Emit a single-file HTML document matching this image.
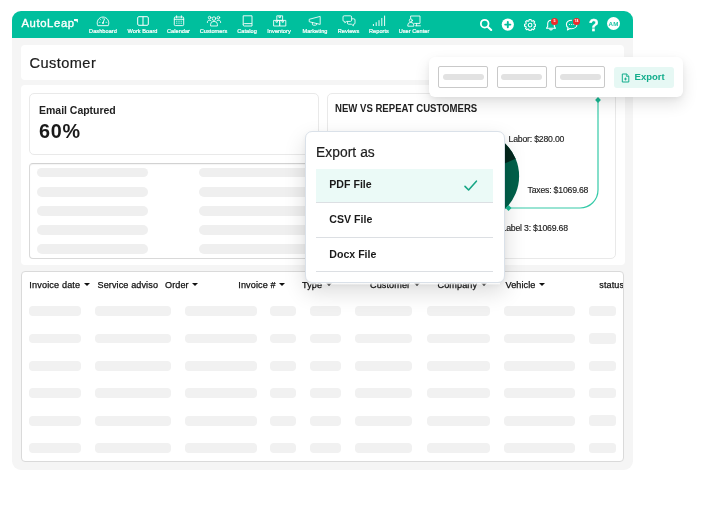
<!DOCTYPE html>
<html lang="en">
<head>
<meta charset="utf-8">
<title>AutoLeap - Customer</title>
<style>
*{box-sizing:border-box;margin:0;padding:0}
html,body{width:720px;height:516px;background:#fff;overflow:hidden}
body{position:relative;will-change:transform;font-family:"Liberation Sans","DejaVu Sans",sans-serif;color:#1b1b1b}
.abs{position:absolute}
#win{left:12px;top:11px;width:621px;height:459px;background:#f5f5f5;border-radius:9px;overflow:hidden}
#nav{left:0;top:0;width:621px;height:26.5px;background:#00bf9d}
#logo{font-size:11.3px;line-height:14px;color:#fff;font-weight:400;letter-spacing:.62px;white-space:nowrap;-webkit-text-stroke:.35px #fff}
.ni{position:absolute;top:0;height:26px;width:50px;margin-left:-25px;text-align:center;color:#fff}
.ni svg{position:absolute;left:50%;top:5.2px;width:14px;height:10px;margin-left:-7px;overflow:visible}
.ni span{position:absolute;left:-10px;right:-10px;top:17.3px;font-size:5.6px;line-height:6px;white-space:nowrap;font-weight:400;letter-spacing:.05px;-webkit-text-stroke:.22px #fff}
.card{position:absolute;background:#fff;border-radius:4px}
.sk{position:absolute;height:9.8px;border-radius:5px;background:#efefef;margin-top:-.2px}
.th{position:absolute;top:278.6px;letter-spacing:.1px;font-size:9.1px;line-height:12px;white-space:nowrap;color:#111;font-weight:400;-webkit-text-stroke:.25px #111}
.th i{display:inline-block;width:0;height:0;border-left:3px solid transparent;border-right:3px solid transparent;border-top:3.4px solid #111;margin-left:3.4px;vertical-align:1.2px}
.tb{position:absolute;height:9.7px;border-radius:4px;background:#f1f1f1}
</style>
</head>
<body>
<div id="win" class="abs">
  <div id="nav" class="abs"></div>
</div>

<!-- NAV CONTENT (page coords) -->
<div id="logo" class="abs" style="left:21.4px;top:16.25px">AutoLeap</div>
<svg class="abs" style="left:74.3px;top:18.6px" width="3.9" height="4.1" viewBox="0 0 5 5"><path d="M0 0L5 0L5 5Q4.4 3.6 3.2 2.9Q1.8 2.2 0 2.3Z" fill="#fff"/></svg>

<div class="ni" style="left:103px;top:11px"><svg viewBox="0 0 14 10" fill="none" stroke="#fff" stroke-width="0.9" stroke-linecap="round" stroke-linejoin="round"><path d="M1.6 9.3A5.9 5.9 0 1 1 12.4 9.3Z"/><path d="M7 6.8L8.6 2.8"/><circle cx="7" cy="7" r="0.9" fill="#fff" stroke="none"/><path d="M3.2 6.3h.8M10 6.3h.8M4.3 3.4l.5.5M7 2.1v.7" stroke-width=".7"/></svg><span>Dashboard</span></div>
<div class="ni" style="left:142.5px;top:11px"><svg viewBox="0 0 14 10" fill="none" stroke="#fff" stroke-width="1"><rect x="1.7" y="0.7" width="10.6" height="8.6" rx="1.2"/><path d="M7 0.7V9.3"/></svg><span>Work Board</span></div>
<div class="ni" style="left:178.5px;top:11px"><svg viewBox="0 0 14 10" fill="none" stroke="#fff" stroke-width="0.9"><rect x="2.3" y="1" width="9.4" height="8.6" rx="1"/><path d="M2.3 3.3H11.7M4.6 -0.2V1.8M9.4 -0.2V1.8" stroke-linecap="round"/><path d="M4.3 5.2h1M6.5 5.2h1M8.7 5.2h1M4.3 7.2h1M6.5 7.2h1M8.7 7.2h1" stroke-width="1"/></svg><span>Calendar</span></div>
<div class="ni" style="left:213.5px;top:11px"><svg viewBox="0 0 14 10" fill="none" stroke="#fff" stroke-width="0.85" stroke-linecap="round"><circle cx="7" cy="2.6" r="1.8"/><path d="M3.6 9.6V8.2A3.4 2.8 0 0 1 10.4 8.2V9.6Z" stroke-linejoin="round"/><circle cx="2.6" cy="1.6" r="1.3"/><circle cx="11.4" cy="1.6" r="1.3"/><path d="M0.4 6.6V5.8A2.2 2 0 0 1 4 4.6M13.6 6.6V5.8A2.2 2 0 0 0 10 4.6"/></svg><span>Customers</span></div>
<div class="ni" style="left:247px;top:11px"><svg viewBox="0 0 14 10" fill="none" stroke="#fff" stroke-width="0.9" stroke-linejoin="round"><path d="M3.2 -0.2H12V10H4.4A1.2 1.2 0 0 1 3.2 8.8Z"/><path d="M3.2 8.6A1.2 1.2 0 0 1 4.4 7.6H12"/></svg><span>Catalog</span></div>
<div class="ni" style="left:279px;top:11px"><svg viewBox="0 0 14 10" fill="none" stroke="#fff" stroke-width="0.85" stroke-linejoin="round"><rect x="4.8" y="-0.2" width="5.8" height="4.6"/><path d="M7 -0.2V1.6H8.4V-0.2"/><rect x="1.6" y="4.4" width="6.1" height="5.6"/><rect x="7.7" y="4.4" width="6.1" height="5.6"/><path d="M4 4.4V6.2H5.4V4.4M10 4.4V6.2H11.4V4.4"/></svg><span>Inventory</span></div>
<div class="ni" style="left:315px;top:11px"><svg viewBox="0 0 14 10" fill="none" stroke="#fff" stroke-width="0.85" stroke-linejoin="round" stroke-linecap="round"><path d="M1.6 3.2L12.2 0.4V8.4L1.6 5.8Z"/><path d="M4.4 6.5V8.2A1 1 0 0 0 5.4 9.2H7.6A1 1 0 0 0 8.6 8.2V7.6"/></svg><span>Marketing</span></div>
<div class="ni" style="left:348.5px;top:11px"><svg viewBox="0 0 14 10" fill="none" stroke="#fff" stroke-width="0.85" stroke-linejoin="round"><path d="M2.2 -0.2H8.4A1.2 1.2 0 0 1 9.6 1V4.2A1.2 1.2 0 0 1 8.4 5.4H4.6L2.8 6.8V5.4H2.2A1.2 1.2 0 0 1 1 4.2V1A1.2 1.2 0 0 1 2.2 -0.2Z"/><path d="M9.6 2.8H11.8A1.2 1.2 0 0 1 13 4V7A1.2 1.2 0 0 1 11.8 8.2H11.4V9.8L9.4 8.2H6.6A1.2 1.2 0 0 1 5.4 7V5.4"/></svg><span>Reviews</span></div>
<div class="ni" style="left:379px;top:11px"><svg viewBox="0 0 14 10" fill="none" stroke="#fff" stroke-width="0.95" stroke-linecap="round"><path d="M1.4 9.6V8.4M4.2 9.6V6.6M7 9.6V4.6M9.8 9.6V2.4M12.6 9.6V0"/></svg><span>Reports</span></div>
<div class="ni" style="left:414px;top:11px"><svg viewBox="0 0 14 10" fill="none" stroke="#fff" stroke-width="0.85" stroke-linejoin="round" stroke-linecap="round"><path d="M3.6 2.4V0H13V7.4H7.6"/><circle cx="3.8" cy="4.4" r="1.5"/><path d="M0.8 9.8V9A3 2.6 0 0 1 6.8 9V9.8Z"/><path d="M8.6 9.8H13.4M9.6 7.4V9.8"/></svg><span>User Center</span></div>

<!-- right nav icons -->
<svg class="abs" style="left:479px;top:17.6px" width="15" height="14" viewBox="0 0 15 14" fill="none" stroke="#fff"><circle cx="5.7" cy="5.7" r="3.85" stroke-width="1.8"/><path d="M8.7 8.7L12.2 12" stroke-width="2.1" stroke-linecap="round"/></svg>
<svg class="abs" style="left:501px;top:18px" width="14" height="14" viewBox="0 0 14 14"><circle cx="6.8" cy="6.6" r="6.1" fill="#fff"/><path d="M6.8 4V9.2M4.2 6.6H9.4" stroke="#00bf9d" stroke-width="1.9" stroke-linecap="round"/></svg>
<svg class="abs" style="left:523.9px;top:18.6px" width="12.2" height="12.2" viewBox="0 0 14 14" fill="none" stroke="#fff" stroke-width="1.25" stroke-linejoin="round"><path d="M5.9 0.9h2.2l.3 1.6 1 .45 1.4-.9 1.5 1.5-.9 1.4.45 1 1.6.3v2.2l-1.6.3-.45 1 .9 1.4-1.5 1.5-1.4-.9-1 .45-.3 1.6H5.9l-.3-1.6-1-.45-1.4.9-1.5-1.5.9-1.4-.45-1-1.6-.3V6.25l1.6-.3.45-1-.9-1.4 1.5-1.5 1.4.9 1-.45z" transform="translate(0 -.3)"/><circle cx="7" cy="7" r="2.1"/></svg>
<svg class="abs" style="left:545px;top:17px" width="14" height="15" viewBox="0 0 14 15" fill="none" stroke="#fff" stroke-width="1.05" stroke-linejoin="round" stroke-linecap="round"><path d="M6 3.2A3.3 3.3 0 0 0 2.7 6.5V9.4L1.5 11.2H10.5L9.3 9.4V6.5"/><path d="M4.8 12.2A1.3 1.3 0 0 0 7.2 12.2"/><circle cx="9.5" cy="4.5" r="3.5" fill="#ee2b2b" stroke="none"/></svg>
<div class="abs" style="left:551px;top:19px;width:7px;text-align:center;font-size:3.6px;line-height:5px;color:#fff;font-weight:700">5</div>
<svg class="abs" style="left:565px;top:17px" width="16" height="15" viewBox="0 0 16 15" fill="none" stroke="#fff" stroke-width="1.05" stroke-linejoin="round" stroke-linecap="round"><path d="M6.6 3.2C3.6 3.2 1.4 5 1.4 7.4C1.4 8.7 2 9.8 3.1 10.6L2.4 13L5 11.5C5.5 11.6 6 11.7 6.6 11.7C9.6 11.7 11.9 9.8 11.9 7.4"/><path d="M4.4 7.5h.1M6.6 7.5h.1M8.8 7.5h.1" stroke-width="1.1"/><circle cx="11.5" cy="4.5" r="3.5" fill="#ee2b2b" stroke="none"/></svg>
<div class="abs" style="left:573px;top:19px;width:7px;text-align:center;font-size:3.4px;line-height:5px;color:#fff;font-weight:700">74</div>
<div class="abs" style="left:587.7px;top:14.9px;width:12px;text-align:center;font-size:16.4px;line-height:20px;color:#fff;font-weight:700;-webkit-text-stroke:.3px #fff">?</div>
<div class="abs" style="left:606.9px;top:17px;width:13.1px;height:13.1px;border-radius:50%;background:#fff"></div>
<div class="abs" style="left:606.9px;top:20px;width:13.4px;text-align:center;font-size:6.2px;line-height:7px;color:#19c3a3;font-weight:700;letter-spacing:.15px">AM</div>

<!-- header card -->
<div class="card" style="left:20.7px;top:44.5px;width:603.8px;height:35px"></div>
<div class="abs" style="left:29.4px;top:54.6px;font-size:14.6px;line-height:17px;color:#1b1b1b;white-space:nowrap;letter-spacing:.45px;-webkit-text-stroke:.2px #1b1b1b">Customer</div>

<!-- content card -->
<div class="card" style="left:20.7px;top:85px;width:604px;height:180.3px"></div>
<div class="abs" style="left:29px;top:92.5px;width:289.5px;height:62px;border:1px solid #e9e9e9;border-radius:5px;background:#fff"></div>
<div class="abs" style="left:39.1px;top:103.6px;font-size:10.5px;line-height:13px;font-weight:700;white-space:nowrap;color:#222;letter-spacing:-.03px">Email Captured</div>
<div class="abs" style="left:38.9px;top:120.2px;font-size:19.8px;line-height:23px;font-weight:700;white-space:nowrap;color:#1a1a1a;letter-spacing:.75px">60%</div>

<div class="abs" style="left:29px;top:163px;width:290px;height:96.3px;border:1px solid #d9d9d9;border-top-color:#d2d2d2;border-radius:4px;background:#fff;box-shadow:inset 0 1px 1px rgba(0,0,0,.04)"></div>
<div class="sk" style="left:37.4px;top:167.8px;width:111px"></div>
<div class="sk" style="left:37.4px;top:187px;width:111px"></div>
<div class="sk" style="left:37.4px;top:206.2px;width:111px"></div>
<div class="sk" style="left:37.4px;top:225.4px;width:111px"></div>
<div class="sk" style="left:37.4px;top:244.6px;width:111px"></div>
<div class="sk" style="left:199px;top:167.8px;width:111px"></div>
<div class="sk" style="left:199px;top:187px;width:111px"></div>
<div class="sk" style="left:199px;top:206.2px;width:111px"></div>
<div class="sk" style="left:199px;top:225.4px;width:111px"></div>
<div class="sk" style="left:199px;top:244.6px;width:111px"></div>

<!-- chart card -->
<div class="abs" style="left:327px;top:92.5px;width:288.5px;height:166.8px;border:1px solid #e9e9e9;border-radius:5px;background:#fff"></div>
<div class="abs" style="left:335px;top:101.5px;font-size:10.5px;line-height:13px;font-weight:700;white-space:nowrap;color:#222;transform:scaleX(.912);transform-origin:0 50%">NEW VS REPEAT CUSTOMERS</div>
<svg class="abs" style="left:420px;top:125px" width="110" height="100" viewBox="420 125 110 100">
  <circle cx="473.8" cy="176.2" r="45.3" fill="#00604a"/>
  <path d="M473.8 176.2L473.8 130.9A45.3 45.3 0 0 1 515.6 158.8Z" fill="#04271d"/>
  <path d="M473.8 176.2L473.8 130.9A45.3 45.3 0 0 0 440 206.4Z" fill="#7fdccb"/>
</svg>
<div class="abs" style="left:508.5px;top:132.6px;font-size:8.7px;line-height:12px;white-space:nowrap;color:#222;letter-spacing:-.2px;-webkit-text-stroke:.15px #222">Labor: $280.00</div>
<div class="abs" style="left:527.5px;top:183.8px;font-size:8.7px;line-height:12px;white-space:nowrap;color:#222;letter-spacing:-.2px;-webkit-text-stroke:.15px #222">Taxes: $1069.68</div>
<div class="abs" style="left:501.6px;top:222.2px;font-size:8.7px;line-height:12px;white-space:nowrap;color:#222;letter-spacing:-.2px;-webkit-text-stroke:.15px #222">Label 3: $1069.68</div>

<!-- table card -->
<div class="abs" style="left:21px;top:271.3px;width:603px;height:190.5px;border:1px solid #dadada;border-radius:4px;background:#fff;overflow:hidden"></div>
<div class="th" style="left:29.3px;letter-spacing:.16px">Invoice date<i style="margin-left:3.8px"></i></div>
<div class="th" style="left:97.5px">Service adviso</div>
<div class="th" style="left:165px">Order<i></i></div>
<div class="th" style="left:238.3px">Invoice #<i></i></div>
<div class="th" style="left:302px">Type<i></i></div>
<div class="th" style="left:370px">Customer<i></i></div>
<div class="th" style="left:437.5px">Company<i></i></div>
<div class="th" style="left:505.5px">Vehicle<i></i></div>
<div class="th" style="left:599.3px;width:24px;overflow:hidden">status</div>

<div id="rows">
<div class="tb" style="left:28.8px;top:306.25px;width:52.4px"></div><div class="tb" style="left:94.6px;top:306.25px;width:76.2px"></div><div class="tb" style="left:184.6px;top:306.25px;width:72px"></div><div class="tb" style="left:270.4px;top:306.25px;width:25.6px"></div><div class="tb" style="left:310px;top:306.25px;width:30.5px"></div><div class="tb" style="left:354.5px;top:306.25px;width:57.5px"></div><div class="tb" style="left:426.5px;top:306.25px;width:63.5px"></div><div class="tb" style="left:504px;top:306.25px;width:71px"></div><div class="tb" style="left:589px;top:305.85px;width:27px;height:10.4px;border-radius:3.5px"></div>
<div class="tb" style="left:28.8px;top:333.65px;width:52.4px"></div><div class="tb" style="left:94.6px;top:333.65px;width:76.2px"></div><div class="tb" style="left:184.6px;top:333.65px;width:72px"></div><div class="tb" style="left:270.4px;top:333.65px;width:25.6px"></div><div class="tb" style="left:310px;top:333.65px;width:30.5px"></div><div class="tb" style="left:354.5px;top:333.65px;width:57.5px"></div><div class="tb" style="left:426.5px;top:333.65px;width:63.5px"></div><div class="tb" style="left:504px;top:333.65px;width:71px"></div><div class="tb" style="left:589px;top:333.25px;width:27px;height:10.4px;border-radius:3.5px"></div>
<div class="tb" style="left:28.8px;top:361.05px;width:52.4px"></div><div class="tb" style="left:94.6px;top:361.05px;width:76.2px"></div><div class="tb" style="left:184.6px;top:361.05px;width:72px"></div><div class="tb" style="left:270.4px;top:361.05px;width:25.6px"></div><div class="tb" style="left:310px;top:361.05px;width:30.5px"></div><div class="tb" style="left:354.5px;top:361.05px;width:57.5px"></div><div class="tb" style="left:426.5px;top:361.05px;width:63.5px"></div><div class="tb" style="left:504px;top:361.05px;width:71px"></div><div class="tb" style="left:589px;top:360.65px;width:27px;height:10.4px;border-radius:3.5px"></div>
<div class="tb" style="left:28.8px;top:388.45px;width:52.4px"></div><div class="tb" style="left:94.6px;top:388.45px;width:76.2px"></div><div class="tb" style="left:184.6px;top:388.45px;width:72px"></div><div class="tb" style="left:270.4px;top:388.45px;width:25.6px"></div><div class="tb" style="left:310px;top:388.45px;width:30.5px"></div><div class="tb" style="left:354.5px;top:388.45px;width:57.5px"></div><div class="tb" style="left:426.5px;top:388.45px;width:63.5px"></div><div class="tb" style="left:504px;top:388.45px;width:71px"></div><div class="tb" style="left:589px;top:388.05px;width:27px;height:10.4px;border-radius:3.5px"></div>
<div class="tb" style="left:28.8px;top:415.85px;width:52.4px"></div><div class="tb" style="left:94.6px;top:415.85px;width:76.2px"></div><div class="tb" style="left:184.6px;top:415.85px;width:72px"></div><div class="tb" style="left:270.4px;top:415.85px;width:25.6px"></div><div class="tb" style="left:310px;top:415.85px;width:30.5px"></div><div class="tb" style="left:354.5px;top:415.85px;width:57.5px"></div><div class="tb" style="left:426.5px;top:415.85px;width:63.5px"></div><div class="tb" style="left:504px;top:415.85px;width:71px"></div><div class="tb" style="left:589px;top:415.45px;width:27px;height:10.4px;border-radius:3.5px"></div>
<div class="tb" style="left:28.8px;top:443.25px;width:52.4px"></div><div class="tb" style="left:94.6px;top:443.25px;width:76.2px"></div><div class="tb" style="left:184.6px;top:443.25px;width:72px"></div><div class="tb" style="left:270.4px;top:443.25px;width:25.6px"></div><div class="tb" style="left:310px;top:443.25px;width:30.5px"></div><div class="tb" style="left:354.5px;top:443.25px;width:57.5px"></div><div class="tb" style="left:426.5px;top:443.25px;width:63.5px"></div><div class="tb" style="left:504px;top:443.25px;width:71px"></div><div class="tb" style="left:589px;top:442.85px;width:27px;height:10.4px;border-radius:3.5px"></div>
</div>

<!-- connector line -->
<svg class="abs" style="left:500px;top:92px;z-index:5" width="110" height="125" viewBox="500 92 110 125" fill="none">
  <path d="M598 100V190A18 18 0 0 1 580 208H508.5" stroke="#35caa8" stroke-width="1.2"/>
  <path d="M598 97.1L600.9 100.1L598 103.1L595.1 100.1Z" fill="#19b893"/>
  <path d="M508.5 205L511.5 208L508.5 211L505.5 208Z" fill="#19b893"/>
</svg>

<!-- toolbar popup -->
<div class="abs" style="left:428.5px;top:57px;width:254.5px;height:39.7px;background:#fff;border-radius:6px;box-shadow:0 7px 16px rgba(0,0,0,.11),0 2px 5px rgba(0,0,0,.05);z-index:6"></div>
<div class="abs" style="left:438.3px;top:66px;width:49.8px;height:22.4px;border:1px solid #c9c9c9;border-radius:2px;background:#fff;z-index:7"></div>
<div class="abs" style="left:497px;top:66px;width:49.6px;height:22.4px;border:1px solid #c9c9c9;border-radius:2px;background:#fff;z-index:7"></div>
<div class="abs" style="left:555.3px;top:66px;width:49.6px;height:22.4px;border:1px solid #c9c9c9;border-radius:2px;background:#fff;z-index:7"></div>
<div class="abs" style="left:442.6px;top:74.4px;width:41px;height:6px;border-radius:3px;background:#e2e2e2;z-index:8"></div>
<div class="abs" style="left:501.2px;top:74.4px;width:41px;height:6px;border-radius:3px;background:#e2e2e2;z-index:8"></div>
<div class="abs" style="left:559.6px;top:74.4px;width:41px;height:6px;border-radius:3px;background:#e2e2e2;z-index:8"></div>
<div class="abs" style="left:614.4px;top:66.5px;width:59.2px;height:21.8px;border-radius:3px;background:#e6f8f4;z-index:7"></div>
<svg class="abs" style="left:621px;top:72.5px;z-index:8" width="9" height="10" viewBox="0 0 9 10" fill="none" stroke="#13ad8c" stroke-width="1" stroke-linejoin="round"><path d="M1.3 1H5.6L7.8 3.2V9H1.3Z"/><path d="M5.4 1V3.4H7.8" stroke-width=".8"/><path d="M4.5 4.6V7.4M3.1 6H5.9" stroke-width=".9"/></svg>
<div class="abs" style="left:634.6px;top:71px;font-size:9.5px;line-height:12px;font-weight:700;color:#13ad8c;white-space:nowrap;z-index:8;letter-spacing:0">Export</div>

<!-- export popup -->
<div class="abs" style="left:304.5px;top:131.1px;width:200.2px;height:152px;background:#fff;border:1px solid #dae1e9;border-radius:7px;box-shadow:0 9px 22px rgba(0,0,0,.14),0 2px 5px rgba(0,0,0,.05);z-index:10"></div>
<div class="abs" style="left:309px;top:283.1px;width:191px;height:2px;background:linear-gradient(rgba(255,255,255,.92) 0%,rgba(255,255,255,.75) 45%,rgba(255,255,255,0) 100%);z-index:10"></div>
<div class="abs" style="left:316px;top:144px;font-size:13.8px;line-height:17px;color:#1e1e1e;white-space:nowrap;z-index:11;letter-spacing:.06px;-webkit-text-stroke:.2px #1e1e1e">Export as</div>
<div class="abs" style="left:316.4px;top:168.8px;width:176.2px;height:33.6px;background:#ebfaf7;z-index:11"></div>
<div class="abs" style="left:316.4px;top:202.2px;width:176.2px;height:1px;background:#dcdfe3;z-index:11"></div>
<div class="abs" style="left:316.4px;top:236.8px;width:176.2px;height:1px;background:#dcdfe3;z-index:11"></div>
<div class="abs" style="left:316.4px;top:271.4px;width:176.2px;height:1px;background:#dcdfe3;z-index:11"></div>
<div class="abs" style="left:329.3px;top:178.3px;font-size:10.6px;line-height:13px;font-weight:700;color:#1a1a1a;white-space:nowrap;z-index:12;letter-spacing:0">PDF File</div>
<div class="abs" style="left:329.3px;top:212.9px;font-size:10.6px;line-height:13px;font-weight:700;color:#1a1a1a;white-space:nowrap;z-index:12;letter-spacing:0">CSV File</div>
<div class="abs" style="left:329.3px;top:247.5px;font-size:10.6px;line-height:13px;font-weight:700;color:#1a1a1a;white-space:nowrap;z-index:12;letter-spacing:0">Docx File</div>
<svg class="abs" style="left:462px;top:178px;z-index:12" width="18" height="16" viewBox="0 0 18 16" fill="none"><path d="M3 8.4L6.6 12L14.4 3.2" stroke="#17a686" stroke-width="1.6" stroke-linecap="round" stroke-linejoin="round"/></svg>


</body>
</html>
